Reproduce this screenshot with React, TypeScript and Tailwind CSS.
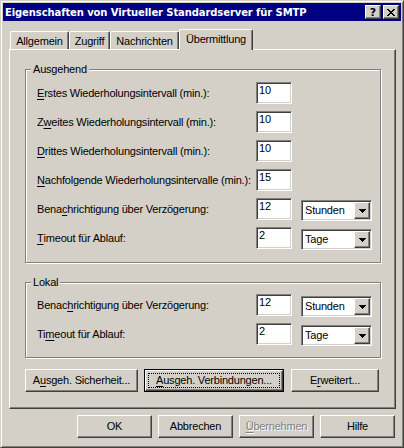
import React from "react";

// classic 3D edges
const raised =
  "border border-t-white border-l-white border-r-[#404040] border-b-[#404040] shadow-[inset_-1px_-1px_0_#808080]";
const sunken =
  "border border-t-[#808080] border-l-[#808080] border-r-white border-b-white shadow-[inset_1px_1px_0_#404040,inset_-1px_-1px_0_#d4d0c8]";

const Key = ({ children }: { children: React.ReactNode }) => (
  <span className="underline underline-offset-[2px] decoration-1">{children}</span>
);

const ArrowDown = () => (
  <svg width="7" height="4" viewBox="0 0 7 4" shapeRendering="crispEdges">
    <rect x="0" y="0" width="7" height="1" fill="#000" />
    <rect x="1" y="1" width="5" height="1" fill="#000" />
    <rect x="2" y="2" width="3" height="1" fill="#000" />
    <rect x="3" y="3" width="1" height="1" fill="#000" />
  </svg>
);

const CloseGlyph = () => (
  <svg width="8" height="7" viewBox="0 0 8 7" shapeRendering="crispEdges">
    <rect x="0" y="0" width="2" height="1" fill="#000" />
    <rect x="6" y="0" width="2" height="1" fill="#000" />
    <rect x="1" y="1" width="2" height="1" fill="#000" />
    <rect x="5" y="1" width="2" height="1" fill="#000" />
    <rect x="2" y="2" width="4" height="1" fill="#000" />
    <rect x="3" y="3" width="2" height="1" fill="#000" />
    <rect x="2" y="4" width="4" height="1" fill="#000" />
    <rect x="1" y="5" width="2" height="1" fill="#000" />
    <rect x="5" y="5" width="2" height="1" fill="#000" />
    <rect x="0" y="6" width="2" height="1" fill="#000" />
    <rect x="6" y="6" width="2" height="1" fill="#000" />
  </svg>
);

const Combo = ({ value }: { value: string }) => (
  <div className={`ml-[9px] mt-[2px] flex h-[21px] w-[71px] bg-white p-[1px] ${sunken}`}>
    <div className="flex flex-1 items-center pl-[2px] leading-[13px]">{value}</div>
    <div className={`flex h-[17px] w-[16px] items-center justify-center bg-[#d4d0c8] ${raised}`}>
      <ArrowDown />
    </div>
  </div>
);

type RowProps = { label: React.ReactNode; value: string; unit?: string };

const Row = ({ label, value, unit }: RowProps) => (
  <div className="flex h-[22px] items-start">
    <div className="flex h-[22px] w-[219px] items-center leading-[13px]">{label}</div>
    <div className={`h-[22px] w-[36px] bg-white pl-[2px] pt-[1px] leading-[13px] ${sunken}`}>{value}</div>
    {unit && <Combo value={unit} />}
  </div>
);

const Group = ({ title, children, className }: { title: string; children: React.ReactNode; className?: string }) => (
  <div
    className={`relative border border-[#808080] pl-[11px] shadow-[inset_1px_1px_0_#fff,1px_1px_0_#fff] ${className ?? ""}`}
  >
    <span className="absolute -top-[7px] left-[5px] bg-[#d4d0c8] px-[2px] leading-[13px]">{title}</span>
    <div className="flex flex-col gap-[7px]">{children}</div>
  </div>
);

const Button = ({
  children,
  width,
  isDefault,
  disabled,
  className,
}: {
  children: React.ReactNode;
  width: string;
  isDefault?: boolean;
  disabled?: boolean;
  className?: string;
}) => {
  const text = disabled ? "text-[#808080] [text-shadow:1px_1px_0_#fff]" : "text-black";
  if (isDefault) {
    return (
      <div className={`h-[23px] ${width} border border-black ${className ?? ""}`}>
        <div className={`flex h-full w-full bg-[#d4d0c8] p-[2px] ${raised}`}>
          <div className={`flex flex-1 items-center justify-center border border-dotted border-black leading-[13px] ${text}`}>
            {children}
          </div>
        </div>
      </div>
    );
  }
  return (
    <div
      className={`flex h-[23px] ${width} items-center justify-center bg-[#d4d0c8] leading-[13px] ${raised} ${text} ${className ?? ""}`}
    >
      {children}
    </div>
  );
};

const Tab = ({ label, width, selected }: { label: string; width: string; selected?: boolean }) =>
  selected ? (
    <div
      className={`relative z-10 -mb-[1px] flex h-[21px] ${width} justify-center rounded-t-[2px] border-l border-t border-r border-l-white border-t-white border-r-[#404040] bg-[#d4d0c8] pt-[3px] leading-[13px] shadow-[inset_-1px_0_0_#808080]`}
    >
      {label}
    </div>
  ) : (
    <div
      className={`flex h-[18px] ${width} justify-center rounded-t-[2px] border-l border-t border-r border-l-white border-t-white border-r-[#404040] pt-[3px] leading-[13px] shadow-[inset_-1px_0_0_#808080]`}
    >
      {label}
    </div>
  );

export default function App() {
  return (
    <div
      className={`flex h-[448px] w-[404px] flex-col border border-t-[#d4d0c8] border-l-[#d4d0c8] border-r-[#404040] border-b-[#404040] bg-[#d4d0c8] p-[2px] font-['Liberation_Sans',Arial,sans-serif] text-[11px] tracking-[-0.2px] text-black shadow-[inset_1px_1px_0_#fff,inset_-1px_-1px_0_#808080]`}
    >
      {/* title bar */}
      <div className="flex h-[18px] items-center bg-[#000080] pl-[2px] pr-[2px]">
        <span className="font-['DejaVu_Sans',sans-serif] text-[10px] font-bold tracking-[-0.1px] text-white">
          Eigenschaften von Virtueller Standardserver für SMTP
        </span>
        <div className="ml-auto flex gap-[2px]">
          <div
            className={`flex h-[14px] w-[16px] items-center justify-center bg-[#d4d0c8] font-['DejaVu_Sans',sans-serif] text-[11px] font-bold leading-none tracking-normal ${raised}`}
          >
            ?
          </div>
          <div className={`flex h-[14px] w-[16px] items-center justify-center bg-[#d4d0c8] ${raised}`}>
            <CloseGlyph />
          </div>
        </div>
      </div>

      {/* tabs */}
      <div className="ml-[7px] mt-[8px] flex h-[20px] items-end">
        <Tab label="Allgemein" width="w-[59px]" />
        <Tab label="Zugriff" width="w-[41px]" />
        <Tab label="Nachrichten" width="w-[69px]" />
        <Tab label="Übermittlung" width="w-[74px]" selected />
      </div>

      {/* tab panel */}
      <div className={`ml-[6px] flex h-[360px] w-[387px] flex-col pl-[15px] pt-[19px] ${raised}`}>
        <Group title="Ausgehend" className="w-[356px] pb-[13px] pt-[12px]">
          <Row label={<><Key>E</Key>rstes Wiederholungsintervall (min.):</>} value="10" />
          <Row label={<>Z<Key>w</Key>eites Wiederholungsintervall (min.):</>} value="10" />
          <Row label={<><Key>D</Key>rittes Wiederholungsintervall (min.):</>} value="10" />
          <Row label={<><Key>N</Key>achfolgende Wiederholungsintervalle (min.):</>} value="15" />
          <Row label={<>Bena<Key>c</Key>hrichtigung über Verzögerung:</>} value="12" unit="Stunden" />
          <Row label={<><Key>T</Key>imeout für Ablauf:</>} value="2" unit="Tage" />
        </Group>

        <Group title="Lokal" className="mt-[19px] w-[356px] pb-[12px] pt-[11px]">
          <Row label={<>Benac<Key>h</Key>richtigung über Verzögerung:</>} value="12" unit="Stunden" />
          <Row label={<>Ti<Key>m</Key>eout für Ablauf:</>} value="2" unit="Tage" />
        </Group>

        <div className="mt-[11px] flex">
          <Button width="w-[113px]">
            A<Key>u</Key>sgeh. Sicherheit...
          </Button>
          <Button width="w-[140px]" isDefault className="ml-[6px]">
            <Key>A</Key>usgeh. Verbindungen...
          </Button>
          <Button width="w-[88px]" className="ml-[7px]">
            E<Key>r</Key>weitert...
          </Button>
        </div>
      </div>

      {/* dialog buttons */}
      <div className="mt-[6px] flex justify-end gap-[6px] pr-[6px]">
        <Button width="w-[75px]">OK</Button>
        <Button width="w-[75px]">Abbrechen</Button>
        <Button width="w-[75px]" disabled>
          <Key>Ü</Key>bernehmen
        </Button>
        <Button width="w-[75px]">Hilfe</Button>
      </div>
    </div>
  );
}
